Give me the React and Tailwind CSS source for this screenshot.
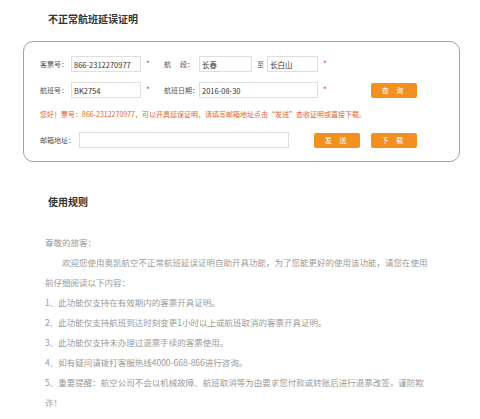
import React from 'react';

const font = { fontFamily: '"Noto Sans CJK SC", "Noto Sans", sans-serif' };

const Star = ({ className = '' }) => (
  <span className={`text-[8px] text-[#e0362c] leading-none ${className}`}>*</span>
);

const Field = ({ value = '', width }) => (
  <input
    readOnly
    defaultValue={value}
    className={`${width} h-[16px] border border-[#dedede] bg-white pl-[2px] text-[7.5px] text-[#333] outline-none`}
  />
);

const OrangeButton = ({ label, className = '' }) => (
  <button
    className={`w-[46px] h-[15px] rounded-[2px] bg-[#f39020] text-white text-[7px] leading-[15px] tracking-[3px] ${className}`}
  >
    {label}
  </button>
);

const rules = [
  '1、此功能仅支持在有效期内的客票开具证明。',
  '2、此功能仅支持航班到达时刻变更1小时以上或航班取消的客票开具证明。',
  '3、此功能仅支持未办理过退票手续的客票使用。',
  '4、如有疑问请拨打客服热线4000-668-866进行咨询。',
];

export default function App() {
  return (
    <div className="w-[480px] h-[419px] bg-white overflow-hidden" style={font}>
      {/* 标题 */}
      <div className="h-[41px] pt-[12px] pl-[48px] text-[10px] leading-[14px] font-bold text-[#333]">
        不正常航班延误证明
      </div>

      {/* 查询表单 */}
      <div className="ml-[23px] w-[437px] h-[121px] border border-[#8ca7ba] rounded-[10px] pt-[14px] pl-[16px] text-[7px] text-[#555]">
        <div className="flex items-center h-[16px]">
          <span className="w-[31px]">客票号：</span>
          <Field value="866-2312270977" width="w-[70px]" />
          <span className="w-[23px] pl-[5px]"><Star /></span>
          <span className="w-[35px] flex">
            <span>航</span>
            <span className="ml-[9px]">段：</span>
          </span>
          <Field value="长春" width="w-[53px]" />
          <span className="w-[15px] pl-[5px]">至</span>
          <Field value="长白山" width="w-[51px]" />
          <span className="pl-[5px]"><Star /></span>
        </div>

        <div className="flex items-center h-[16px] mt-[10px]">
          <span className="w-[31px]">航班号：</span>
          <Field value="BK2754" width="w-[70px]" />
          <span className="w-[23px] pl-[5px]"><Star /></span>
          <span className="w-[35px]">航班日期：</span>
          <Field value="2016-08-30" width="w-[119px]" />
          <span className="w-[53px] pl-[5px]"><Star /></span>
          <OrangeButton label="查 询" />
        </div>

        <div className="flex items-center h-[16px] mt-[8px] text-[#e4642b] whitespace-nowrap">
          您好！票号：866-2312270977，可以开具延误证明，请填写邮箱地址点击“发送”查收证明或直接下载。
        </div>

        <div className="flex items-center h-[16px] mt-[10px]">
          <span className="w-[39px]">邮箱地址：</span>
          <Field width="w-[210px]" />
          <OrangeButton label="发 送" className="ml-[25px]" />
          <OrangeButton label="下 载" className="ml-[11px]" />
        </div>
      </div>

      {/* 使用规则 */}
      <div className="mt-[33px] pl-[48px] text-[10px] leading-[14px] font-bold text-[#333]">
        使用规则
      </div>

      <div className="mt-[23px] pl-[45px] w-[470px] text-[8.5px] leading-[20px] text-[#9a9a9a] whitespace-nowrap">
        <div>尊敬的旅客：</div>
        <div className="indent-[17px]">
          欢迎您使用奥凯航空不正常航班延误证明自助开具功能，为了您能更好的使用该功能，请您在使用
          <br />
          前仔细阅读以下内容：
        </div>
        {rules.map((r) => (
          <div key={r}>{r}</div>
        ))}
        <div>
          5、重要提醒：航空公司不会以机械故障、航班取消等为由要求您付款或转账后进行退票改签，谨防欺
          <br />
          诈！
        </div>
      </div>
    </div>
  );
}
